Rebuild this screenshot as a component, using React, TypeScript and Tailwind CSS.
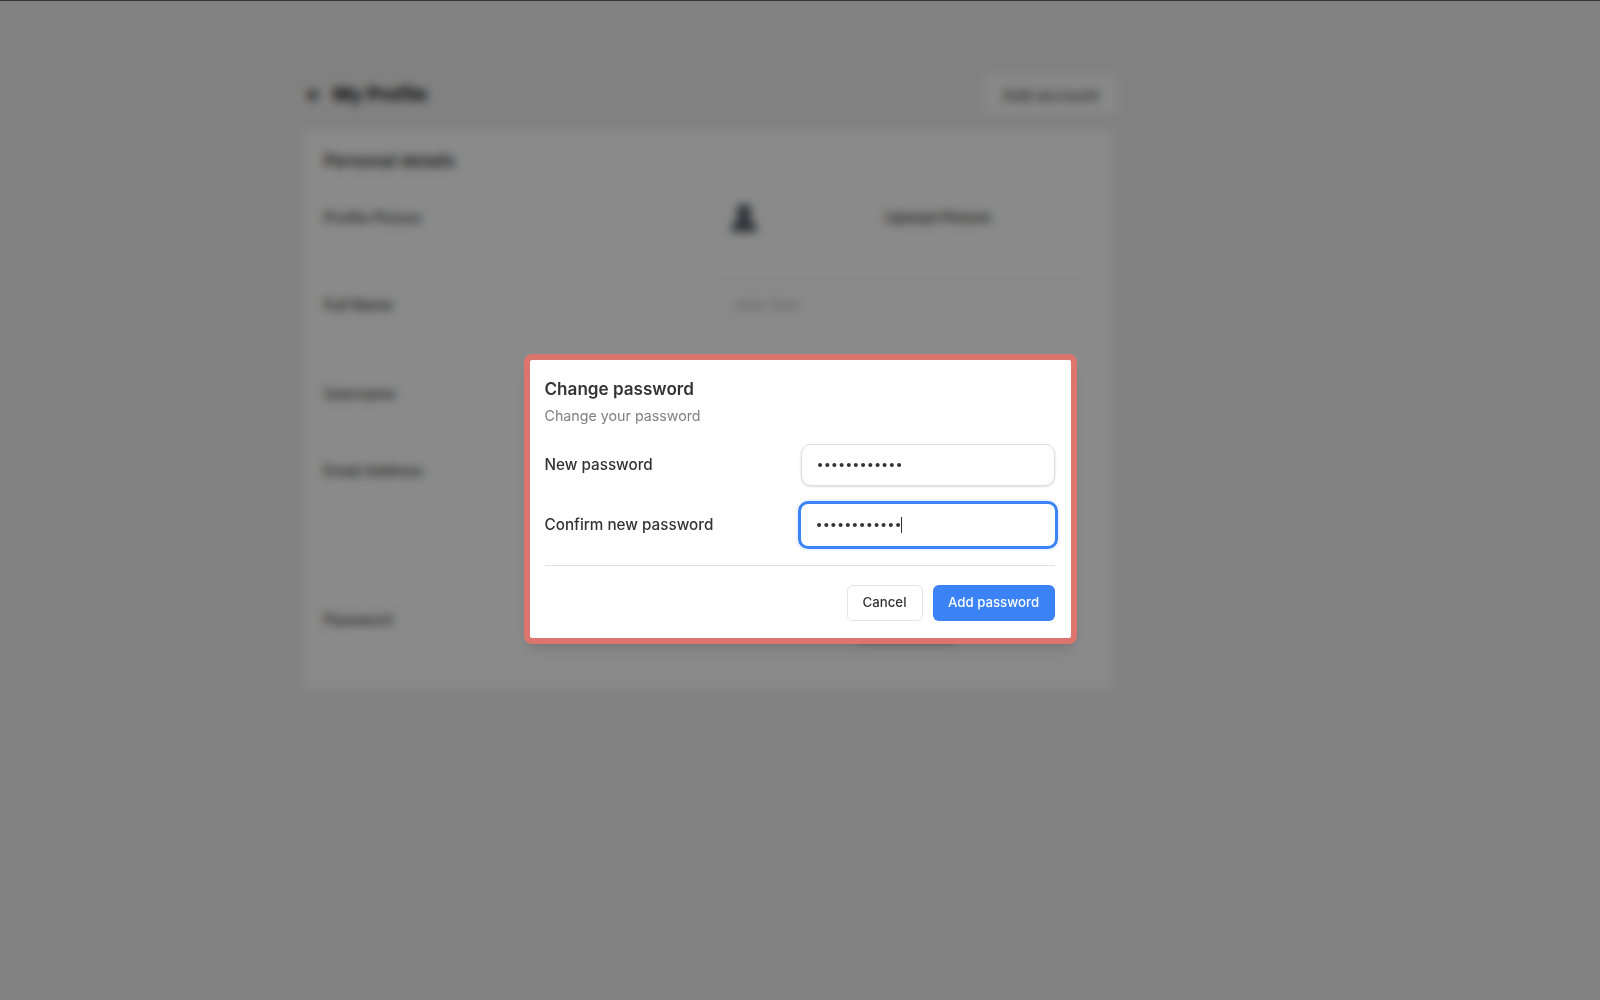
export default function App() {
  const font = { fontFamily: 'Inter, "Noto Sans", sans-serif' };
  return (
    <div style={font} className="relative h-[1000px] w-[1600px] overflow-hidden bg-[#ececec] border-t border-[#333] text-[#333]">
      <div className="ml-[303px] w-[815px] pt-[71px]">
        <div className="flex h-[46px] items-center justify-between">
          <div className="flex items-center gap-[10px] text-[19px] font-bold text-[#111]">
            <span className="ml-[2px]">←</span>
            <span>My Profile</span>
          </div>
          <div className="flex h-[42px] w-[135px] items-center justify-center rounded-md bg-[#f8f8f8] text-[16px] text-[#333] shadow-sm">Add account</div>
        </div>
        <div className="mt-[12px] h-[562px] w-[810px] rounded-md border border-[#f4f4f4] bg-[#fbfbfb] px-[20px] pt-[18px] shadow-sm">
          <div className="text-[17px] leading-[24px] font-semibold text-[#333]">Personal details</div>
          <div className="mt-[15px] flex h-[60px] items-center">
            <div className="w-[404px] text-[14.5px] font-medium">Profile Picture</div>
            <svg viewBox="0 0 30 30" className="h-[32px] w-[32px]" fill="#4f5863">
              <circle cx="15" cy="9" r="7" />
              <path d="M3 28c0-8 5-13 12-13s12 5 12 13z" />
            </svg>
            <div className="ml-[125px] text-[15px] font-medium">Upload Picture</div>
          </div>
          <div className="mt-[33px] flex h-[48px] items-center">
            <div className="w-[390px] text-[14.5px] font-medium">Full Name</div>
            <div className="flex h-[44px] w-[390px] items-center rounded-md border border-[#f0f0f0] px-[24px] text-[14.5px] text-[#aaa]">John Doe</div>
          </div>
          <div className="mt-[41px] flex h-[48px] items-center">
            <div className="text-[14.5px] font-medium">Username</div>
          </div>
          <div className="mt-[29px] flex h-[48px] items-center">
            <div className="text-[14.5px] font-medium">Email Address</div>
          </div>
          <div className="mt-[103px] flex h-[44px] items-center">
            <div className="w-[532px] text-[14.5px] font-medium">Password</div>
            <div className="mt-[4px] h-[40px] w-[100px] rounded-md bg-[#999]" />
          </div>
        </div>
      </div>

      <div className="absolute inset-0 flex items-center justify-center bg-black/45 pb-[4px] backdrop-blur-[5px]">
        <div className="h-[290px] w-[553px] rounded-lg border-[6px] border-[#dc756d] bg-white pt-[17px] pr-[16px] pl-[15px] shadow-lg">
          <h2 className="text-[17.1px] leading-[24px] font-semibold text-[#333]">Change password</h2>
          <p className="mt-[3px] text-[14.25px] leading-[24px] text-[#808080]">Change your password</p>
          <div className="mt-[16px] flex h-[42px] items-center justify-between">
            <label className="pt-[2px] text-[15.25px] font-medium text-[#333]">New password</label>
            <input
              type="password"
              readOnly
              defaultValue="abcdefghijkl"
              className="h-[42px] w-[254px] rounded-[10px] border border-[#ddd] bg-white px-[15px] text-[12.75px] text-[#333] shadow-sm outline-none"
            />
          </div>
          <div className="mt-[18px] flex h-[42px] items-center justify-between">
            <label className="pt-[2px] text-[15.25px] font-medium text-[#333]">Confirm new password</label>
            <div className="relative mr-[-3px] h-[48px] w-[260px]">
              <input
                type="password"
                readOnly
                defaultValue="abcdefghijkl"
                className="h-full w-full rounded-[10px] border-[3px] border-[#3b82f6] bg-white px-[15px] text-[12.75px] text-[#333] shadow-[0_0_0_2px_#eff5ff] outline-none"
              />
              <span className="absolute left-[103px] top-[16px] h-[16px] w-px bg-[#333]" />
            </div>
          </div>
          <div className="mt-[19px] border-t border-[#e2e2e2]" />
          <div className="mt-[19px] flex justify-end gap-[10px]">
            <button className="h-[36px] w-[76px] rounded-md border border-[#e5e5e5] bg-white pt-[1px] text-[13.25px] font-medium text-[#333]">Cancel</button>
            <button className="h-[36px] w-[122px] rounded-md bg-[#3b82f6] pt-[1px] text-[13.25px] font-medium text-white">Add password</button>
          </div>
        </div>
      </div>
    </div>
  );
}
